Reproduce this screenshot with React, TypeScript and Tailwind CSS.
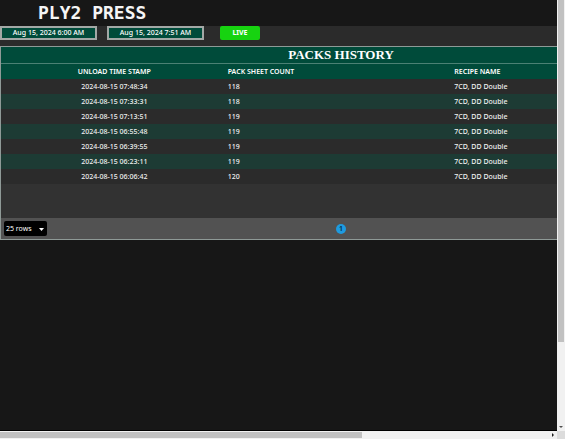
import React from "react";

const packs = [
  { time: "2024-08-15 07:48:34", count: 118 },
  { time: "2024-08-15 07:33:31", count: 118 },
  { time: "2024-08-15 07:13:51", count: 119 },
  { time: "2024-08-15 06:55:48", count: 119 },
  { time: "2024-08-15 06:39:55", count: 119 },
  { time: "2024-08-15 06:23:11", count: 119 },
  { time: "2024-08-15 06:06:42", count: 120 },
];

function DateButton({ label }: { label: string }) {
  return (
    <button
      type="button"
      className="h-[14px] w-[97px] border-2 border-[#a3a8a6] bg-[#004b3a] text-center text-[7px] leading-[10px] font-medium text-white"
    >
      {label}
    </button>
  );
}

function PacksTable() {
  return (
    <section className="flex w-[682px] flex-col border border-[#8f9a97] bg-[#323232]">
      <h2 className="h-[17px] border-b border-[#4b8174] bg-[#004b3a] text-center font-['Liberation_Serif',serif] text-[13px] leading-4 font-bold text-white">
        PACKS HISTORY
      </h2>
      <table className="w-full table-fixed border-collapse text-left text-[7px] leading-[15px] font-medium text-[#f0f0f0]">
        <thead>
          <tr className="h-[15px] bg-[#004b3a] text-white">
            <th className="p-0 text-center font-semibold">UNLOAD TIME STAMP</th>
            <th className="p-0 font-semibold">PACK SHEET COUNT</th>
            <th className="p-0 font-semibold">RECIPE NAME</th>
          </tr>
        </thead>
        <tbody>
          {packs.map((pack) => (
            <tr key={pack.time} className="h-[15px] bg-[#2b2b2b] even:bg-[#1d3b34]">
              <td className="p-0 text-center">{pack.time}</td>
              <td className="p-0">{pack.count}</td>
              <td className="p-0">7CD, DD Double</td>
            </tr>
          ))}
        </tbody>
      </table>
      <footer className="mt-[34px] grid h-[21px] grid-cols-3 items-center bg-[#525252] px-[3px]">
        <div className="relative h-[15px] w-[43px]">
          <select
            aria-label="Rows per page"
            className="block h-[15px] w-full appearance-none rounded-xs bg-black pl-[2px] text-[7px] leading-[15px] text-white"
          >
            <option>25 rows</option>
          </select>
          <svg viewBox="0 0 5 3" className="pointer-events-none absolute top-[7px] right-[3px] h-[3px] w-[5px]" aria-hidden="true">
            <path d="M0 0h5L2.5 3z" fill="#fff" />
          </svg>
        </div>
        <button type="button" aria-label="Page 1" className="size-[10px] justify-self-center rounded-full bg-[#1e9be0] text-center text-[7px] leading-[10px] font-semibold text-[#062a40]">
          1
        </button>
      </footer>
    </section>
  );
}

export default function App() {
  return (
    <div className="grid h-screen grid-cols-[minmax(0,1fr)_8px] grid-rows-[minmax(0,1fr)_8px] overflow-hidden bg-[#f1f1f1] font-['Noto_Sans',sans-serif]">
      <main className="overflow-hidden border-b border-black bg-[#171717]">
        <header className="h-[26px] pl-[38px]">
          <h1 className="font-['DejaVu_Sans_Mono',monospace] text-[18px] leading-[25px] font-bold text-[#f5f5f5]">PLY2 PRESS</h1>
        </header>
        <div className="flex h-5 items-start gap-[10px] bg-[#2b2b2b]">
          <DateButton label="Aug 15, 2024 6:00 AM" />
          <DateButton label="Aug 15, 2024 7:51 AM" />
          <button type="button" className="ml-[6px] h-[14px] w-10 rounded-xs bg-[#17d310] text-center text-[7px] leading-[14px] font-bold text-white">
            LIVE
          </button>
        </div>
        <PacksTable />
      </main>
      <div className="flex flex-col items-center justify-between pb-[3px]" aria-hidden="true">
        <div className="h-[342px] w-[6px] bg-[#c1c1c1]" />
        <svg viewBox="0 0 4 2" className="h-[2px] w-1">
          <path d="M0 0h4L2 2z" fill="#505050" />
        </svg>
      </div>
      <div className="flex items-center justify-between pr-[3px]" aria-hidden="true">
        <div className="h-[6px] w-[362px] bg-[#c1c1c1]" />
        <svg viewBox="0 0 2 4" className="h-1 w-[2px]">
          <path d="M0 0v4L2 2z" fill="#202020" />
        </svg>
      </div>
      <div className="bg-[#dcdcdc]" />
    </div>
  );
}
